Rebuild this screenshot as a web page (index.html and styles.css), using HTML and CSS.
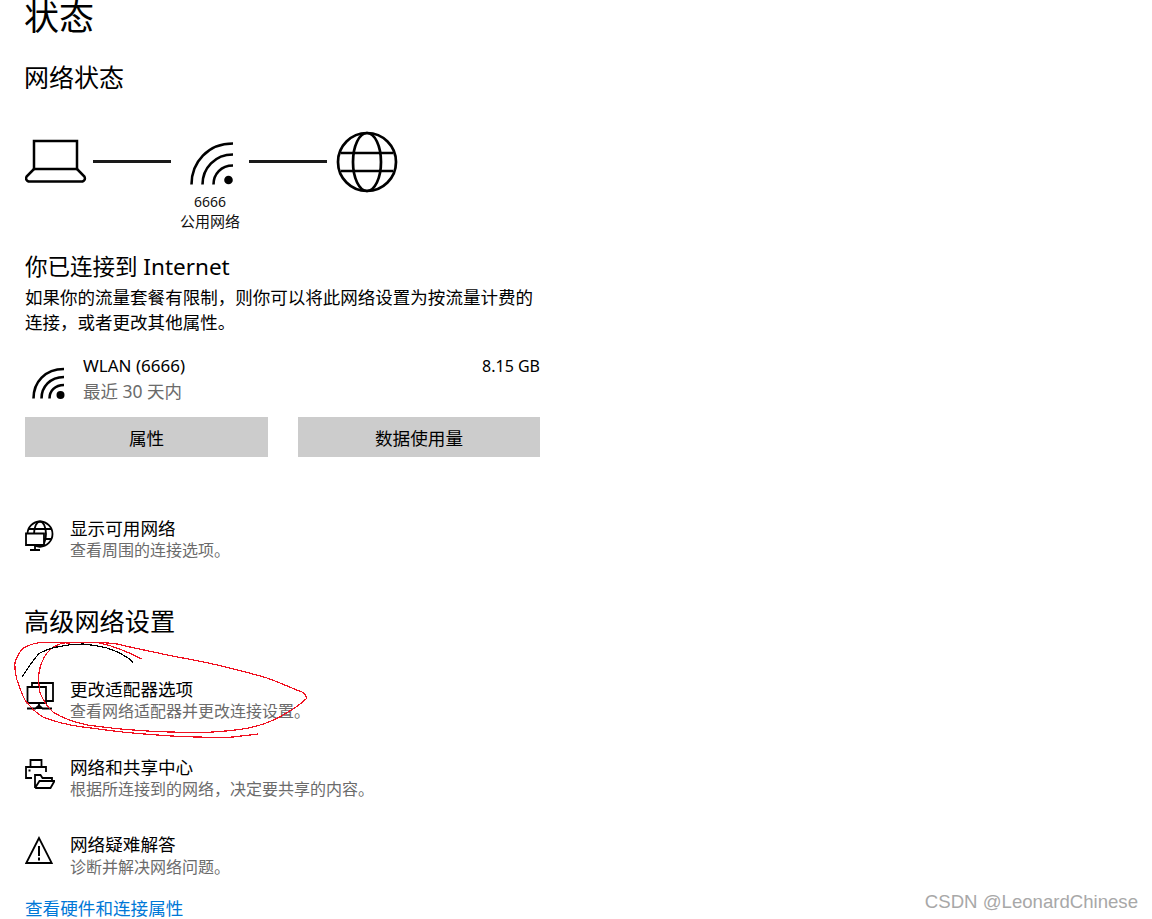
FILE: index.html
```html
<!DOCTYPE html>
<html lang="zh-CN">
<head>
<meta charset="utf-8">
<title>状态</title>
<link rel="stylesheet" href="styles.css">
</head>
<body>
<main class="page">
  <h1 class="title">状态</h1>
  <h2 class="heading net-heading">网络状态</h2>
  <div class="diagram">
    <svg class="dia-icon laptop" viewBox="0 0 62 62" fill="none" stroke="#000" stroke-width="2.500">
      <path d="M9 10h43v28H9z"/>
      <path d="M9 38 1.600 45.500Q0 49 3.500 50.500H57.500Q61 49 59.400 45.500L52 38"/>
    </svg>
    <span class="link-line"></span>
    <div class="wifi-col">
      <svg class="wifi" viewBox="0 0 44 44" fill="none" stroke="#000" stroke-width="2.600">
        <path d="M1.500 42.500C1.500 20 18 1.500 43 1.500"/>
        <path d="M12.500 42.500C12.500 26 25 12.500 43 12.500"/>
        <path d="M23.500 42.500C23.500 32 31 23.500 43 23.500"/>
        <circle cx="38.500" cy="38" r="4.300" fill="#000" stroke="none"/>
      </svg>
      <span class="wifi-name">6666</span>
      <span class="wifi-type">公用网络</span>
    </div>
    <span class="link-line"></span>
    <svg class="dia-icon globe" viewBox="0 0 62 62" fill="none" stroke="#000" stroke-width="2.700">
      <circle cx="31" cy="31" r="29"/>
      <ellipse cx="31" cy="31" rx="14" ry="29"/>
      <path d="M5 22h52M5 40h52"/>
    </svg>
  </div>
  <h2 class="heading conn-heading">你已连接到 Internet</h2>
  <p class="conn-text">如果你的流量套餐有限制，则你可以将此网络设置为按流量计费的<br>连接，或者更改其他属性。</p>
  <div class="usage">
    <svg class="usage-icon" viewBox="0 0 34 34" fill="none" stroke="#000" stroke-width="2.600">
      <path d="M1.500 31.500C1.500 15 13 2 32 2"/>
      <path d="M9.500 31.500C9.500 20 18 10 32 10"/>
      <path d="M17.500 31.500C17.500 24 23 18 32 18"/>
      <circle cx="28.500" cy="28" r="4" fill="#000" stroke="none"/>
    </svg>
    <div class="usage-text">
      <div class="usage-name"><span class="usage-label">WLAN (6666)</span><span>8.15 GB</span></div>
      <div class="usage-sub">最近 30 天内</div>
    </div>
  </div>
  <div class="buttons">
    <button class="btn">属性</button>
    <button class="btn">数据使用量</button>
  </div>
  <div class="row row-avail">
    <svg class="row-icon" viewBox="0 0 30 32" fill="none" stroke="#000" stroke-width="1.800">
      <circle cx="15" cy="14" r="12.500"/>
      <ellipse cx="15" cy="14" rx="6" ry="12.500"/>
      <path d="M3.500 9h23M3.500 19h23"/>
      <path d="M1 13.500h18V25H1z" fill="#fff"/>
      <path d="M10 25v4.500M5 30h10"/>
    </svg>
    <div class="row-text"><div class="row-title">显示可用网络</div><div class="row-sub">查看周围的连接选项。</div></div>
  </div>
  <h2 class="heading adv-heading">高级网络设置</h2>
  <div class="row row-adapter">
    <svg class="row-icon" viewBox="0 0 30 32" fill="none" stroke="#000" stroke-width="1.800">
      <path d="M7 6V2h21v18h-7"/>
      <path d="M2.500 6h18.500v16H2.500zM14 22v3"/>
      <path d="M11 27l3-2.500 3 2.500zM2 27.500h9M17 27.500h10"/>
    </svg>
    <div class="row-text"><div class="row-title">更改适配器选项</div><div class="row-sub">查看网络适配器并更改连接设置。</div></div>
  </div>
  <div class="row row-share">
    <svg class="row-icon" viewBox="0 0 30 32" fill="none" stroke="#000" stroke-width="1.800">
      <path d="M5.500 8V1h11v7"/>
      <path d="M7 19H1V8h20v5M3.500 11.500h2"/>
      <path d="M10 29V16h5.500l2 3H27v3M10 29h15.500L29.500 22H14.500L10 29"/>
    </svg>
    <div class="row-text"><div class="row-title">网络和共享中心</div><div class="row-sub">根据所连接到的网络，决定要共享的内容。</div></div>
  </div>
  <div class="row row-trouble">
    <svg class="row-icon" viewBox="0 0 30 32" fill="none" stroke="#000" stroke-width="1.800">
      <path d="M14 2 1.300 27h25.400z"/>
      <path d="M14 10v10M14 21.500v3" stroke-width="2"/>
    </svg>
    <div class="row-text"><div class="row-title">网络疑难解答</div><div class="row-sub">诊断并解决网络问题。</div></div>
  </div>
  <a class="hw-link" href="#">查看硬件和连接属性</a>
</main>
<svg class="scribble" viewBox="0 0 330 120" fill="none" stroke-width="1.200" shape-rendering="crispEdges">
  <path class="scr-red" d="M141.700 29C132 24 118 17 100 13C88 11 78 13 67 13C55 12 42 11 33 14C26 16 22 18 20 22C16 28 14 33 15 37C15 42 16 46 17 50C20 58 22 65 25 70C31 78 36 83 43 87C55 92 68 95 83 97C100 99 118 102 133 103C155 105 178 107 200 107C212 108 223 108 233 107L258 104"/>
  <path class="scr-red" d="M117 14C102 12 80 12 63 13C55 15 51 18 47 23C42 30 40 36 39 43C38 50 39 57 40 63C44 72 48 78 53 82C62 88 74 92 87 95C102 97 118 99 133 100C146 101 160 102 173 102C187 103 200 103 213 102C228 101 241 100 253 97C265 94 275 90 283 85C292 80 300 75 307 68C306 65 304 63 302 62C291 58 279 52 267 48C250 43 234 39 217 35C200 31 183 28 167 25C150 21 133 18 117 14Z"/>
  <path class="scr-black" d="M22 47C25 43 27 39 30 35C33 31 36 26 40 23C46 20 51 18 57 17C66 15 75 14 83 14C92 15 100 16 107 18C113 20 118 22 123 25C127 27 131 30 133 33"/>
</svg>
<div class="watermark">CSDN @LeonardChinese</div>
</body>
</html>
```
FILE: styles.css
```css
html, body {
  margin: 0;
  padding: 0;
  height: 919px;
  overflow: hidden;
  background: #fff;
}
body {
  position: relative;
  font-family: "Noto Sans", "Noto Sans CJK SC", sans-serif;
  color: #000;
}
.page {
  display: flex;
  flex-direction: column;
  align-items: flex-start;
  padding-left: 25px;
  width: 515px;
}
.title {
  margin: 0 0 0 -1px;
  font-size: 35px;
  font-weight: 400;
  line-height: 34px;
}
.heading {
  margin: 0;
  font-size: 25px;
  font-weight: 400;
  line-height: 34px;
}
.net-heading { margin-top: 26px; margin-left: -1px; }
.diagram {
  display: flex;
  align-items: flex-start;
  margin-top: 37px;
}
.dia-icon { width: 62px; height: 62px; display: block; }
.link-line {
  width: 78px;
  height: 3px;
  margin-top: 29px;
  background: #1a1a1a;
}
.laptop + .link-line { margin-left: 6px; }
.globe { margin-left: 9px; }
.wifi-col {
  display: flex;
  flex-direction: column;
  align-items: center;
  width: 60px;
  height: 100px;
  margin-left: 9px;
  margin-right: 9px;
  padding-top: 11px;
}
.wifi { width: 44px; height: 44px; display: block; margin-left: 3px; }
.wifi-name { font-size: 14px; line-height: 20px; margin-top: 6px; color: #111; }
.wifi-type { font-size: 15px; line-height: 20px; margin-top: -1px; color: #111; }
.heading.conn-heading { margin-top: 8px; font-size: 22.500px; }
.conn-text {
  margin: 1px 0 0;
  font-size: 17.520px;
  line-height: 25px;
}
.usage {
  display: flex;
  width: 515px;
  margin-top: 18px;
}
.usage-icon { width: 34px; height: 34px; margin-top: 14px; margin-left: 7px; display: block; flex: none; }
.usage-text { flex: 1; margin-left: 17px; }
.usage-name {
  display: flex;
  justify-content: space-between;
  font-size: 16px;
  line-height: 26px;
}
.usage-label { font-size: 17px; }
.usage-sub { font-size: 17.500px; line-height: 26px; margin-top: -1px; margin-bottom: 1px; color: #6b6b6b; }
.buttons {
  display: flex;
  gap: 30px;
  margin-top: 12px;
}
.btn {
  box-sizing: border-box;
  width: 243px;
  height: 40px;
  padding: 2px 0 0;
  border: 0;
  background: #cccccc;
  color: #000;
  font: 400 17.600px/38px "Noto Sans", "Noto Sans CJK SC", sans-serif;
}
.buttons .btn + .btn { width: 242px; }
.row {
  display: flex;
  align-items: flex-start;
}
.row-icon { width: 30px; height: 32px; display: block; flex: none; margin-top: 4px; }
.row-text { margin-left: 15px; }
.row-title { font-size: 17.600px; line-height: 24px; }
.row-sub { font-size: 16px; line-height: 21px; color: #6b6b6b; }
.row-avail { margin-top: 59px; }
.heading.adv-heading { margin-top: 43px; margin-left: -1px; font-size: 25.200px; }
.row-adapter { margin-top: 39px; }
.row-share { margin-top: 33px; }
.row-trouble { margin-top: 32px; }
.row-trouble .row-sub { margin-top: 1px; }
.hw-link {
  margin-top: 18px;
  font-size: 17.600px;
  line-height: 24px;
  color: #0078d7;
  text-decoration: none;
}
.scribble {
  position: absolute;
  left: 0;
  top: 630px;
  width: 330px;
  height: 120px;
}
.scr-red { stroke: #f01020; }
.scr-black { stroke: #000; }
.watermark {
  position: absolute;
  right: 14px;
  top: 891px;
  font-family: "Liberation Sans", sans-serif;
  font-size: 18.600px;
  line-height: 22px;
  color: #a8a8a8;
}
```
